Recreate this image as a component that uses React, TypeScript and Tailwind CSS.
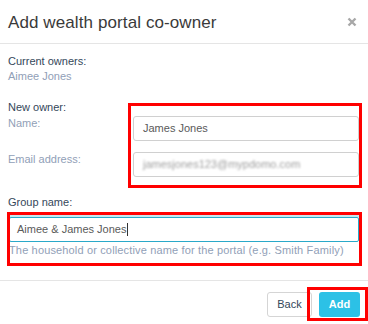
import React from 'react';

const FONT = { fontFamily: '"Liberation Sans", Arial, sans-serif' };

function CloseIcon() {
  return (
    <svg width="10" height="10" viewBox="0 0 10 10" aria-hidden>
      <path d="M1.5 1.5 L8.5 8.5 M8.5 1.5 L1.5 8.5" stroke="#a8a8a8" strokeWidth="2.4" strokeLinecap="butt" />
    </svg>
  );
}

export default function App() {
  return (
    <div className="relative w-[368px] h-[324px] bg-white overflow-hidden" style={FONT}>
      {/* Header */}
      <div className="h-[44px] border-b border-[#e5e5e5] flex items-center justify-between pl-2 pr-[11px]">
        <h1 className="text-[17px] text-[#3a3a3a] leading-none pt-[1px] tracking-[0.1px]">Add wealth portal co-owner</h1>
        <CloseIcon />
      </div>

      {/* Body */}
      <div className="pl-2 pr-[9px] pt-[10px] text-[11px] leading-[15px]">
        <p className="text-[#34475a]">Current owners:</p>
        <p className="text-[#91a0b7]">Aimee Jones</p>

        <p className="mt-[16px] text-[#34475a]">New owner:</p>
        <div className="grid grid-cols-[125px_226px] mt-[1px] gap-y-[11px]">
          <span className="text-[#91a0b7]">Name:</span>
          <div className="h-[25px] border border-[#d0d0d0] rounded-[3px] flex items-center pl-[9px] text-[11px] text-[#5a5a5a]">
            James Jones
          </div>
          <span className="text-[#91a0b7]">Email address:</span>
          <div className="h-[25px] border border-[#d0d0d0] rounded-[3px] flex items-center pl-[9px] text-[11px] text-[#a0a0a0]">
            <span className="blur-[1.2px]">jamesjones123@mypdomo.com</span>
          </div>
        </div>

        <p className="mt-[18px] text-[#34475a]">Group name:</p>
        <div className="mt-[7px] ml-[1px] h-[25px] border border-[#2aa9c9] rounded-[2px] shadow-[0_-3px_0_0_#c6e8ee] flex items-center pl-[7px] text-[11px] text-[#5a5a5a]">
          Aimee &amp; James Jones
          <span className="ml-[1px] w-px h-[13px] bg-[#333]" />
        </div>
        <p className="mt-[1px] ml-[1px] text-[#91a0b7] leading-[14px] tracking-[0.15px]">
          The household or collective name for the portal (e.g. Smith Family)
        </p>
      </div>

      {/* Footer */}
      <div className="absolute left-0 right-0 top-[280px] border-t border-[#e5e5e5] flex justify-end gap-[7px] pt-[11px] pr-2">
        <button className="h-[25px] w-[45px] border border-[#d5d5d5] rounded-[3px] bg-white text-[11px] text-[#34475a]">
          Back
        </button>
        <button className="h-[25px] w-[41px] rounded-[3px] bg-[#2cc1e6] text-[11px] font-bold text-white">
          Add
        </button>
      </div>

      {/* Annotation boxes */}
      <div className="absolute left-[128px] top-[103px] w-[234px] h-[85px] border-[3px] border-[#ff0000]" />
      <div className="absolute left-[7px] top-[212px] w-[355px] h-[54px] border-[3px] border-[#ff0000]" />
      <div className="absolute left-[307px] top-[287px] w-[61px] h-[34px] border-[3px] border-[#ff0000]" />
    </div>
  );
}
